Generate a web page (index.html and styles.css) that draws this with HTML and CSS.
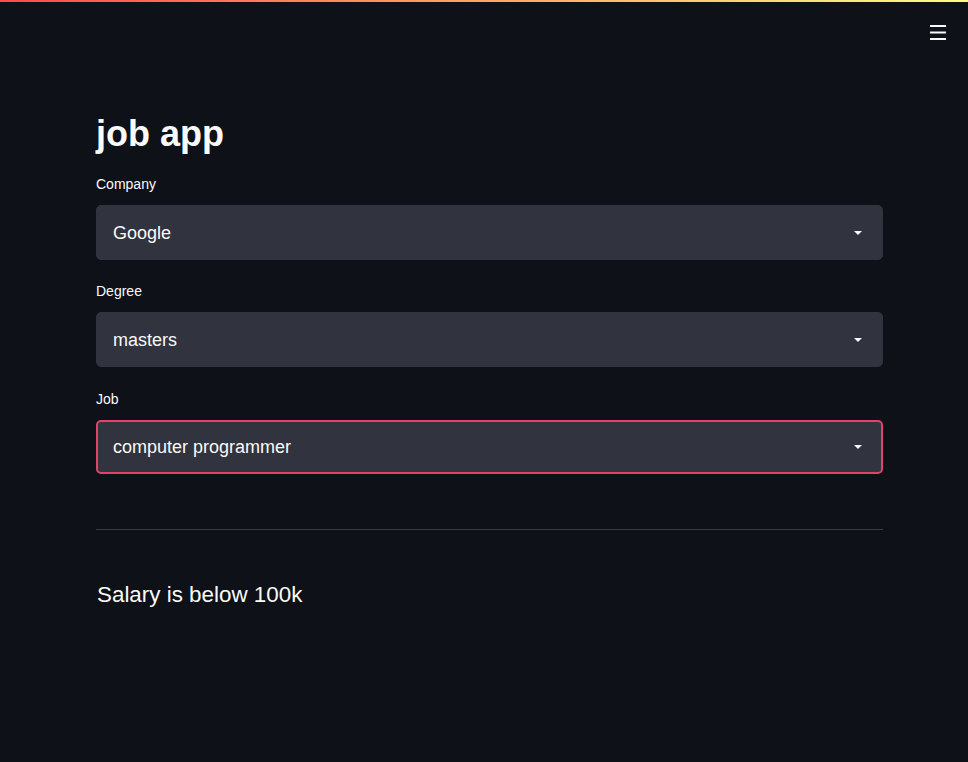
FILE: index.html
```html
<!DOCTYPE html>
<html lang="en">
<head>
<meta charset="utf-8">
<title>job app</title>
<link rel="stylesheet" href="styles.css">
</head>
<body>
<div class="decoration"></div>
<header class="toolbar">
  <svg class="menu-icon" width="16" height="16" viewBox="0 0 16 16" aria-label="menu">
    <rect x="0" y="1" width="16" height="2" fill="#fafafa"/>
    <rect x="0" y="7.5" width="16" height="2" fill="#fafafa"/>
    <rect x="0" y="14" width="16" height="2" fill="#fafafa"/>
  </svg>
</header>
<main class="main">
  <h1 class="title">job app</h1>
  <div class="field">
    <label class="field-label">Company</label>
    <div class="select">
      <span class="select-value">Google</span>
      <svg class="caret" width="8" height="4" viewBox="0 0 8 4"><path d="M0 0 H8 L4 4 Z" fill="#fafafa"/></svg>
    </div>
  </div>
  <div class="field">
    <label class="field-label">Degree</label>
    <div class="select">
      <span class="select-value">masters</span>
      <svg class="caret" width="8" height="4" viewBox="0 0 8 4"><path d="M0 0 H8 L4 4 Z" fill="#fafafa"/></svg>
    </div>
  </div>
  <div class="field field-last">
    <label class="field-label">Job</label>
    <div class="select select-focused">
      <span class="select-value">computer programmer</span>
      <svg class="caret" width="8" height="4" viewBox="0 0 8 4"><path d="M0 0 H8 L4 4 Z" fill="#fafafa"/></svg>
    </div>
  </div>
  <hr class="divider">
  <p class="result">Salary is below 100k</p>
</main>
</body>
</html>
```

FILE: styles.css
```css
html, body {
  margin: 0;
  padding: 0;
}
body {
  background: #0e1117;
  color: #fafafa;
  font-family: "Liberation Sans", Arial, sans-serif;
  min-height: 762px;
}
.decoration {
  height: 2px;
  background: linear-gradient(90deg, #ff4b4b, #fffd80);
}
.toolbar {
  height: 46px;
  display: flex;
  justify-content: flex-end;
  align-items: flex-start;
  padding: 22px 22px 0 0;
  box-sizing: border-box;
}
.menu-icon {
  display: block;
}
.main {
  width: 787px;
  margin-left: 96px;
  padding-top: 64px;
}
.title {
  margin: 0;
  font-size: 36px;
  line-height: 43px;
  font-weight: 700;
}
.field {
  margin-top: 21px;
}
.title + .field {
  margin-top: 19px;
}
.field-last {
  margin-top: 22px;
}
.field-label {
  display: block;
  font-size: 14px;
  line-height: 20px;
  margin-bottom: 11px;
}
.select {
  height: 55px;
  box-sizing: border-box;
  background: #31333f;
  border: 1px solid #31333f;
  border-radius: 5px;
  display: flex;
  align-items: center;
  justify-content: space-between;
  padding: 0 20px 0 16px;
}
.select-focused {
  height: 54px;
  border: 2px solid #e0436b;
  padding: 0 19px 0 15px;
}
.select-value {
  font-size: 18px;
  line-height: 22px;
}
.caret {
  display: block;
}
.divider {
  margin: 55px 0 0 0;
  border: 0;
  height: 1px;
  background: #3b3d45;
}
.result {
  margin: 52px 0 0 1px;
  font-size: 22.4px;
  line-height: 26px;
}
```
